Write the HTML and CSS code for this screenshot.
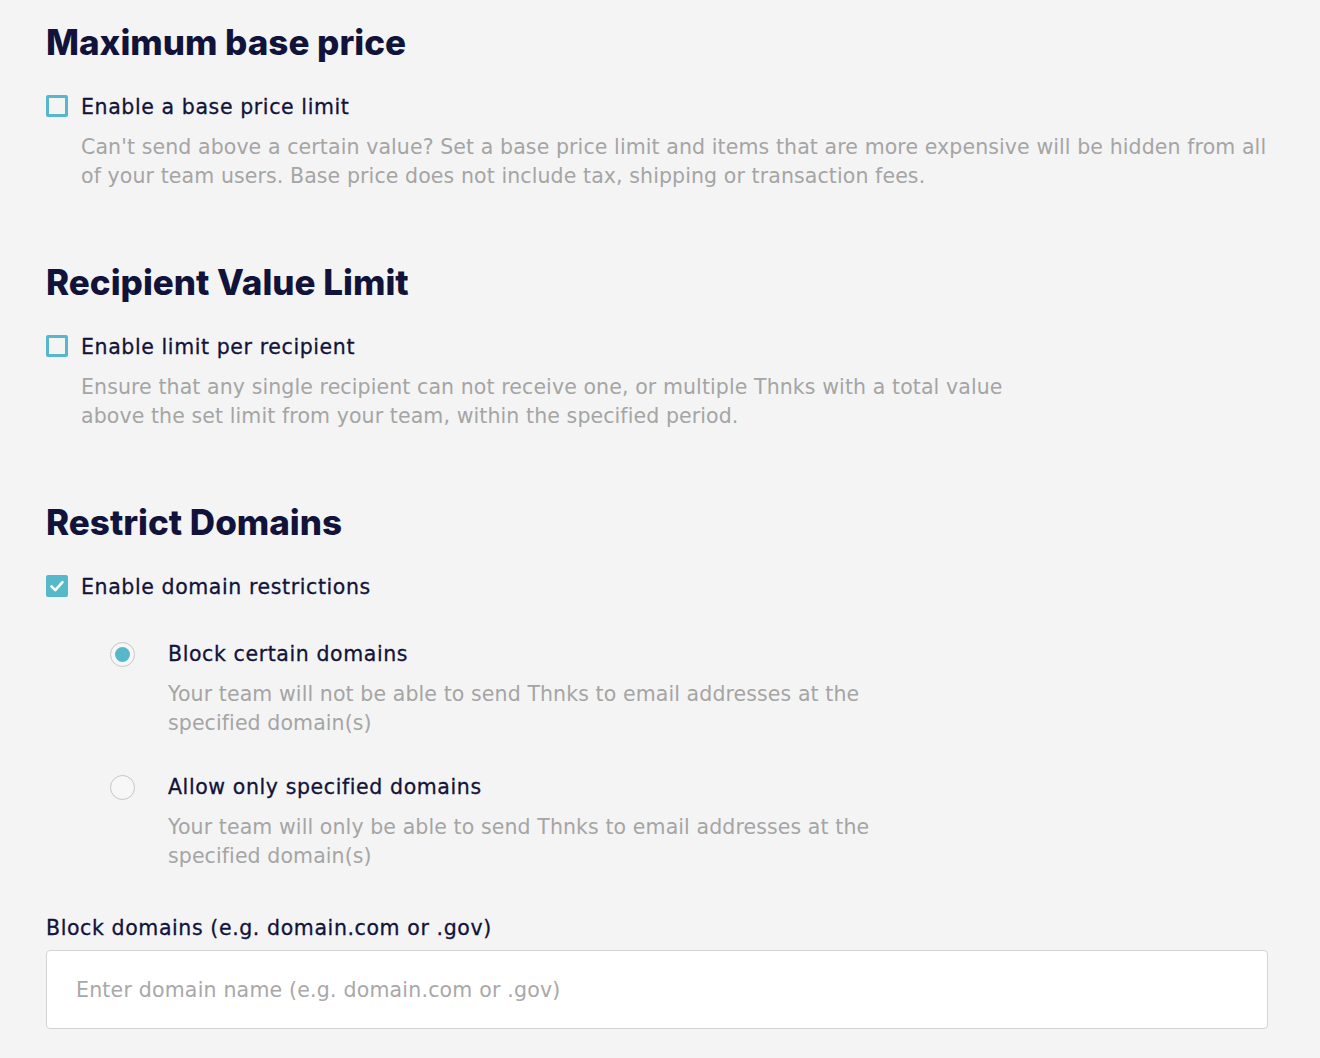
FILE: index.html
```html
<!DOCTYPE html>
<html lang="en">
<head>
<meta charset="utf-8">
<title>Team restrictions</title>
<link rel="stylesheet" href="styles.css">
</head>
<body>
<main class="page">
  <section class="section">
    <h2 class="heading">Maximum base price</h2>
    <label class="check-row">
      <span class="checkbox"></span>
      <span class="check-label">Enable a base price limit</span>
    </label>
    <p class="desc desc-full">Can't send above a certain value? Set a base price limit and items that are more expensive will be hidden from all of your team users. Base price does not include tax, shipping or transaction fees.</p>
  </section>

  <section class="section">
    <h2 class="heading">Recipient Value Limit</h2>
    <label class="check-row">
      <span class="checkbox"></span>
      <span class="check-label">Enable limit per recipient</span>
    </label>
    <p class="desc desc-mid">Ensure that any single recipient can not receive one, or multiple Thnks with a total value above the set limit from your team, within the specified period.</p>
  </section>

  <section class="section">
    <h2 class="heading">Restrict Domains</h2>
    <label class="check-row">
      <span class="checkbox checked">
        <svg viewBox="0 0 22 22" width="22" height="22"><path d="M5.5 11.5l3.8 3.6 7.2-8" fill="none" stroke="#fff" stroke-width="2.6" stroke-linecap="round" stroke-linejoin="round"/></svg>
      </span>
      <span class="check-label">Enable domain restrictions</span>
    </label>

    <div class="radios">
      <div class="radio-item">
        <div class="radio-row">
          <span class="radio selected"></span>
          <span class="radio-label">Block certain domains</span>
        </div>
        <p class="desc desc-radio">Your team will not be able to send Thnks to email addresses at the specified domain(s)</p>
      </div>
      <div class="radio-item">
        <div class="radio-row">
          <span class="radio"></span>
          <span class="radio-label">Allow only specified domains</span>
        </div>
        <p class="desc desc-radio">Your team will only be able to send Thnks to email addresses at the specified domain(s)</p>
      </div>
    </div>

    <div class="field">
      <label class="field-label" for="domains">Block domains (e.g. domain.com or .gov)</label>
      <input id="domains" class="field-input" type="text" placeholder="Enter domain name (e.g. domain.com or .gov)">
    </div>
  </section>
</main>
</body>
</html>
```

FILE: styles.css
```css
* { box-sizing: border-box; }

html, body {
  margin: 0;
  padding: 0;
  background: #f4f4f4;
}

body {
  font-family: "DejaVu Sans", "Noto Sans", "Liberation Sans", sans-serif;
  color: #12133a;
}

.page {
  padding: 22px 52px 30px 46px;
  display: flex;
  flex-direction: column;
  gap: 71px;
}

.section {
  display: flex;
  flex-direction: column;
}

.heading {
  margin: 0;
  font-family: Inter, "Noto Sans", sans-serif;
  font-size: 35px;
  line-height: 40px;
  font-weight: 800;
  letter-spacing: 0;
  color: #12133a;
}

.check-row {
  margin-top: 30px;
  display: flex;
  align-items: center;
  height: 30px;
  cursor: pointer;
}

.checkbox {
  width: 22px;
  height: 22px;
  border: 3px solid #56b9c9;
  border-radius: 2px;
  flex: none;
  margin-top: -3px;
  display: flex;
  align-items: center;
  justify-content: center;
}

.checkbox.checked {
  background: #56b9c9;
  border: none;
}

.check-label,
.radio-label,
.field-label {
  font-size: 20.5px;
  line-height: 30px;
  letter-spacing: 0.6px;
  color: #12133a;
  -webkit-text-stroke: 0.3px #12133a;
}

.check-label { margin-left: 13px; }

.desc {
  margin: 11px 0 0 35px;
  font-size: 20.5px;
  line-height: 29px;
  letter-spacing: 0.1px;
  color: #a5a5a5;
}

.desc-mid { max-width: 930px; }

.radios {
  margin: 37px 0 0 64px;
  display: flex;
  flex-direction: column;
  gap: 34px;
}

.radio-row {
  display: flex;
  align-items: center;
  height: 30px;
}

.radio {
  width: 25px;
  height: 25px;
  border: 1px solid #c6c6c6;
  border-radius: 50%;
  background: #f7f7f7;
  flex: none;
  display: flex;
  align-items: center;
  justify-content: center;
}

.radio.selected::after {
  content: "";
  width: 15px;
  height: 15px;
  border-radius: 50%;
  background: #56b9c9;
}

.radio-label { margin-left: 33px; }

.desc-radio {
  margin: 11px 0 0 58px;
  max-width: 730px;
}

.field {
  margin-top: 42px;
  display: flex;
  flex-direction: column;
}

.field-input {
  margin-top: 7px;
  height: 79px;
  width: 100%;
  border: 1px solid #d3d3d3;
  border-radius: 4px;
  background: #fff;
  padding: 0 29px;
  font-family: inherit;
  font-size: 20.5px;
  letter-spacing: 0.2px;
  color: #12133a;
  outline: none;
}

.field-input::placeholder {
  color: #a8a8a8;
}
```
